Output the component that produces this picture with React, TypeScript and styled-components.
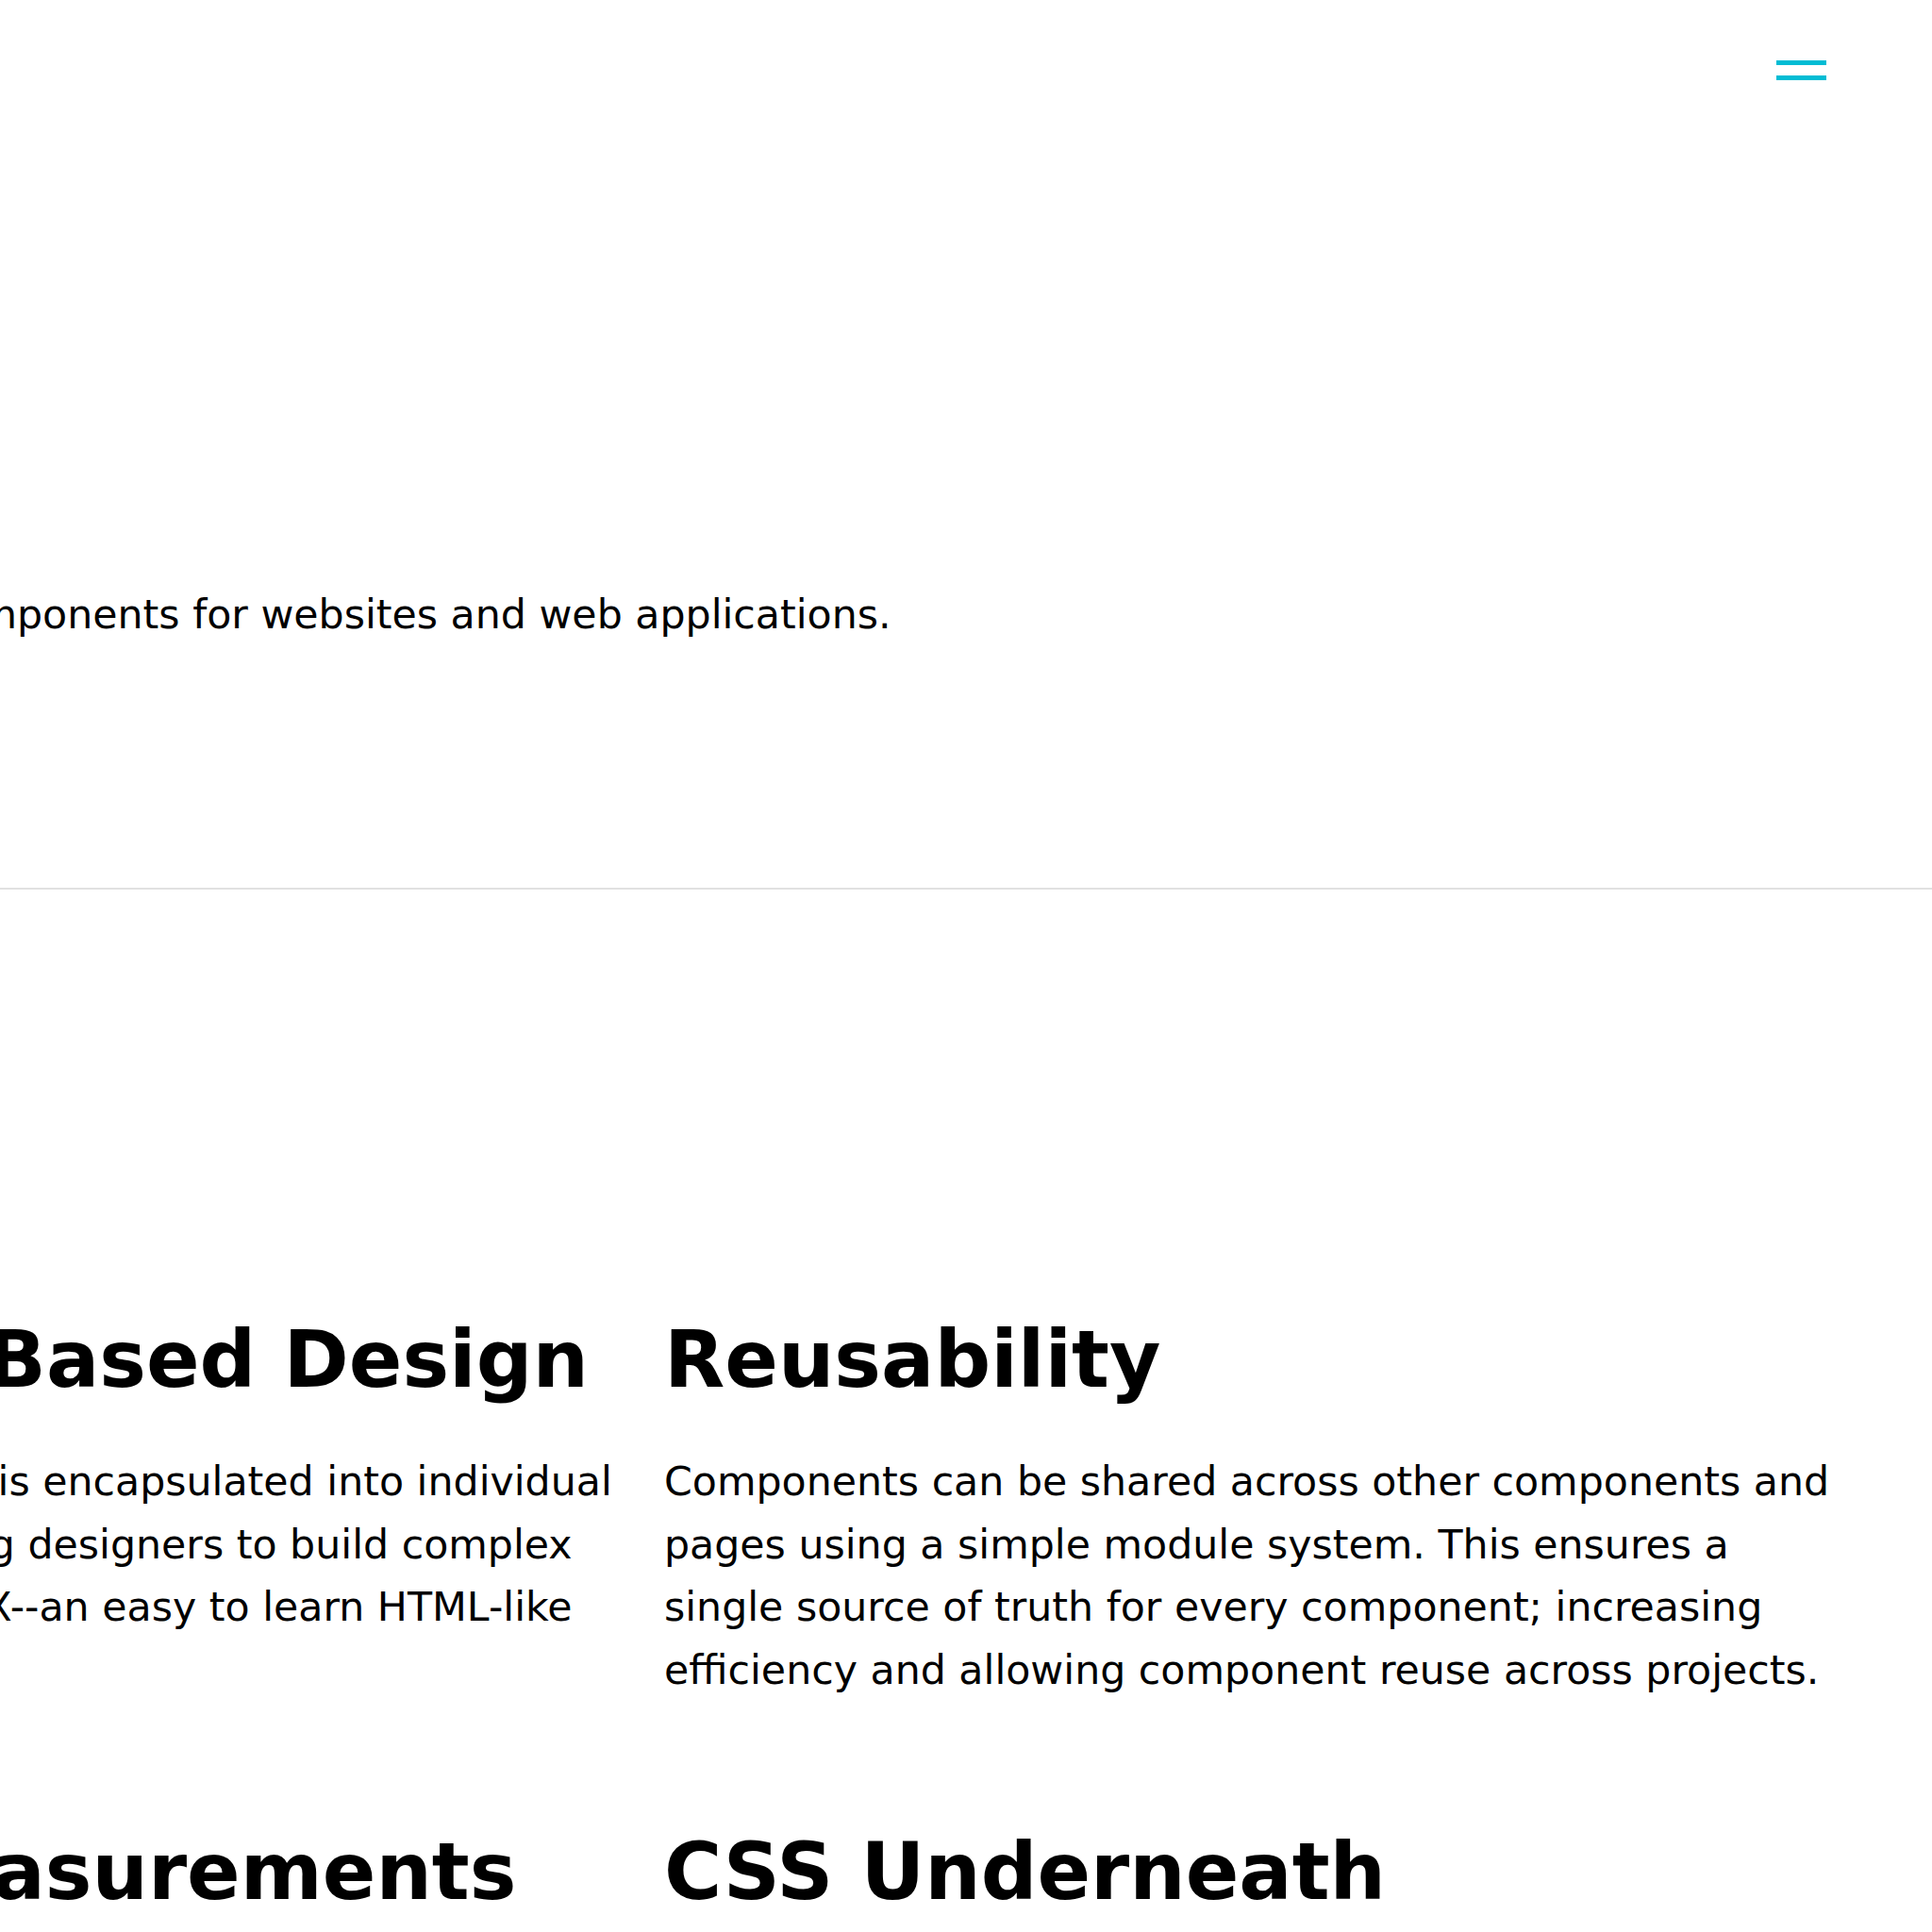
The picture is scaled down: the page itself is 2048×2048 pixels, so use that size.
import React from "react";
import styled, { createGlobalStyle } from "styled-components";

const GlobalStyle = createGlobalStyle`
  html, body {
    margin: 0;
    padding: 0;
    background: #ffffff;
    overflow: hidden;
  }
  body {
    font-family: "DejaVu Sans", Verdana, sans-serif;
    color: #000000;
  }
  * { box-sizing: border-box; }
`;

const Page = styled.div`
  margin-left: -582px;
`;

const Header = styled.header`
  height: 150px;
  padding: 64px 112px 0 0;
  display: flex;
  justify-content: space-between;
  align-items: flex-start;
`;

const Logo = styled.span`
  font-size: 28px;
  font-weight: 700;
  letter-spacing: 1px;
`;

const MenuButton = styled.button`
  width: 53px;
  padding: 0;
  border: 0;
  background: none;
  display: flex;
  flex-direction: column;
  gap: 11px;
  cursor: pointer;
`;

const Bar = styled.span`
  display: block;
  height: 5px;
  width: 100%;
  background: #00bcd4;
`;

const Hero = styled.section`
  padding: 468px 0 256px;
`;

const Lead = styled.p`
  margin: 0;
  font-size: 42.7px;
  line-height: 66.8px;
`;

const Divider = styled.hr`
  margin: 0;
  border: 0;
  border-top: 2px solid #e1e1e1;
`;

const Features = styled.section`
  padding-top: 448px;
  display: grid;
  grid-template-columns: 1250px 1250px;
  column-gap: 36px;
  row-gap: 130px;
`;

const Feature = styled.article`
  display: flex;
  flex-direction: column;
`;

const FeatureTitle = styled.h2`
  margin: 0 0 45.8px;
  font-size: 83.5px;
  line-height: 1.2;
  font-weight: 700;
  white-space: nowrap;
`;

const FeatureText = styled.p`
  margin: 0;
  font-size: 42.7px;
  line-height: 66.8px;
`;

const features = [
  {
    title: "Component Based Design",
    text:
      "Every component's styling is encapsulated into individual components hence allowing designers to build complex custom interfaces using JSX--an easy to learn HTML-like syntax.",
  },
  {
    title: "Reusability",
    text:
      "Components can be shared across other components and pages using a simple module system. This ensures a single source of truth for every component; increasing efficiency and allowing component reuse across projects.",
  },
  {
    title: "Dynamic Measurements",
    text:
      "Sizes are expressed in relative units so layouts scale gracefully across screens and devices of every size.",
  },
  {
    title: "CSS Underneath",
    text:
      "Everything compiles down to plain CSS, so styles stay fast, predictable and easy to inspect in the browser.",
  },
];

export default function App() {
  return (
    <>
      <GlobalStyle />
      <Page>
        <Header>
          <Logo>Kit</Logo>
          <MenuButton aria-label="Open menu">
            <Bar />
            <Bar />
          </MenuButton>
        </Header>
        <Hero>
          <Lead>Build modular reusable components for websites and web applications.</Lead>
        </Hero>
        <Divider />
        <Features>
          {features.map((f) => (
            <Feature key={f.title}>
              <FeatureTitle>{f.title}</FeatureTitle>
              <FeatureText>{f.text}</FeatureText>
            </Feature>
          ))}
        </Features>
      </Page>
    </>
  );
}
